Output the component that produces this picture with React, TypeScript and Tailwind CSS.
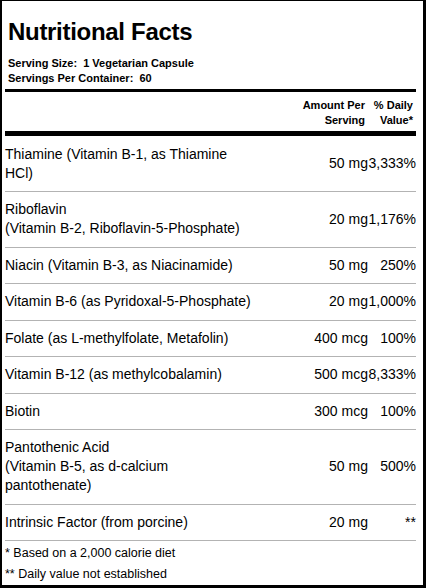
import React from "react";

type Row = { name: React.ReactNode; amount: string; dv: string };

const ROWS: Row[] = [
  { name: "Thiamine (Vitamin B-1, as Thiamine HCl)", amount: "50 mg", dv: "3,333%" },
  {
    name: (
      <>
        Riboflavin
        <br />
        (Vitamin B-2, Riboflavin-5-Phosphate)
      </>
    ),
    amount: "20 mg",
    dv: "1,176%",
  },
  { name: "Niacin (Vitamin B-3, as Niacinamide)", amount: "50 mg", dv: "250%" },
  { name: "Vitamin B-6 (as Pyridoxal-5-Phosphate)", amount: "20 mg", dv: "1,000%" },
  { name: "Folate (as L-methylfolate, Metafolin)", amount: "400 mcg", dv: "100%" },
  { name: "Vitamin B-12 (as methylcobalamin)", amount: "500 mcg", dv: "8,333%" },
  { name: "Biotin", amount: "300 mcg", dv: "100%" },
  {
    name: (
      <>
        Pantothenic Acid
        <br />
        (Vitamin B-5, as d-calcium pantothenate)
      </>
    ),
    amount: "50 mg",
    dv: "500%",
  },
  { name: "Intrinsic Factor (from porcine)", amount: "20 mg", dv: "**" },
];

export default function App() {
  return (
    <div className="box-border flex h-[588px] w-[426px] flex-col border-t border-r-[3px] border-b-[3px] border-l-2 border-black bg-white px-[3px] font-['Liberation_Sans',Arial,sans-serif] text-black">
      <div className="pl-[3px] pr-[4px]">
        <h1 className="mt-[17px] text-[24px] font-bold leading-[28px] tracking-[-0.3px]">
          Nutritional Facts
        </h1>
        <div className="mt-[10px] text-[11px] font-bold leading-[15px]">
          <p>Serving Size:&nbsp; 1 Vegetarian Capsule</p>
          <p>Servings Per Container:&nbsp; 60</p>
        </div>
      </div>

      <div className="mr-[4px] mt-[3px] h-[4px] bg-black" />

      <div className="mr-[4px] flex justify-end pt-[6px] pb-[3px] text-[11px] font-bold leading-[15px]">
        <div className="pr-[3px] text-right">
          Amount Per
          <br />
          Serving
        </div>
        <div className="w-[48px] pr-[3px] text-right">
          % Daily
          <br />
          Value*
        </div>
      </div>

      <div className="mr-[4px] h-[5px] bg-black" />

      <div className="mr-[4px] pt-[1px]">
        {ROWS.map((row, i) => (
          <div
            key={i}
            className="flex items-center border-b border-[#b3b3b3] py-[8.25px] text-[14px] leading-[19px]"
          >
            <div className="w-[249px] shrink-0">{row.name}</div>
            <div className="flex-1 text-right">{row.amount}</div>
            <div className="w-[48px] shrink-0 text-right">{row.dv}</div>
          </div>
        ))}
      </div>

      <div className="pt-[2px] text-[12.5px] leading-[21px]">
        <p>* Based on a 2,000 calorie diet</p>
        <p>** Daily value not established</p>
      </div>
    </div>
  );
}
